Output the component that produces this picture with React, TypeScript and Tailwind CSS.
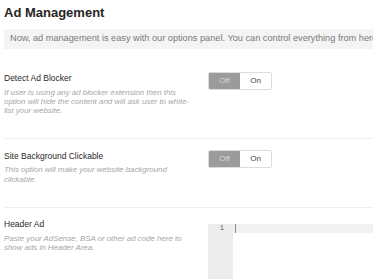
export default function App() {
  const rows = [
    {
      label: 'Detect Ad Blocker',
      desc: 'If user is using any ad blocker extension then this option will hide the content and will ask user to white-list your website.',
      kind: 'toggle',
    },
    {
      label: 'Site Background Clickable',
      desc: 'This option will make your website background clickable.',
      kind: 'toggle',
    },
    {
      label: 'Header Ad',
      desc: 'Paste your AdSense, BSA or other ad code here to show ads in Header Area.',
      kind: 'code',
    },
  ];

  return (
    <div className="w-[373px] h-[279px] overflow-hidden bg-white pl-[4px] font-['Liberation_Sans',Arial,sans-serif]">
      {/* Header */}
      <h1 className="pt-[4px] text-[13px] leading-[18px] font-bold text-[#262626]">Ad Management</h1>
      <div className="mt-[7px] h-[20px] w-[420px] bg-[#f4f4f4] pl-[6px] flex items-center">
        <p className="whitespace-nowrap text-[9.2px] text-[#7a7a7a]">
          Now, ad management is easy with our options panel. You can control everything from here.
        </p>
      </div>

      {/* Option rows */}
      <div className="mt-[19px]">
        {rows.map((row, index) => (
          <div
            key={index}
            className={`flex pt-[4px] ${row.kind === 'code' ? 'border-none' : 'pb-[23px] mb-[6.5px] border-b border-[#efefef]'}`}
          >
            <div className="w-[190px] shrink-0">
              <h3 className="text-[8.5px] leading-[12px] text-[#2a2a2a]">{row.label}</h3>
              <p className="mt-[3.5px] text-[7.88px] leading-[9.3px] italic text-[#a6a6a6]">{row.desc}</p>
            </div>
            <div className="ml-[14px] flex-1">
              {row.kind === 'toggle' ? (
                <div className="flex h-[18px] w-[64px] rounded-[2px] overflow-hidden border border-[#dcdcdc] text-[8px]">
                  <span className="w-[32px] flex items-center justify-center bg-[#9b9b9b] text-[#d6d6d6]">Off</span>
                  <span className="w-[32px] flex items-center justify-center bg-white text-[#444]">On</span>
                </div>
              ) : (
                <div className="mt-[6px] flex h-[60px] bg-white">
                  <div className="w-[25px] bg-[#ececec]">
                    <div className="h-[9px] pr-[9px] text-right text-[7px] leading-[9px] font-['Liberation_Mono',monospace] text-[#555]">1</div>
                  </div>
                  <div className="flex-1">
                    <div className="h-[9px] bg-[#f2f2f2] pl-[2px]">
                      <div className="h-[9px] w-px bg-[#888]" />
                    </div>
                  </div>
                </div>
              )}
            </div>
          </div>
        ))}
      </div>
    </div>
  );
}
